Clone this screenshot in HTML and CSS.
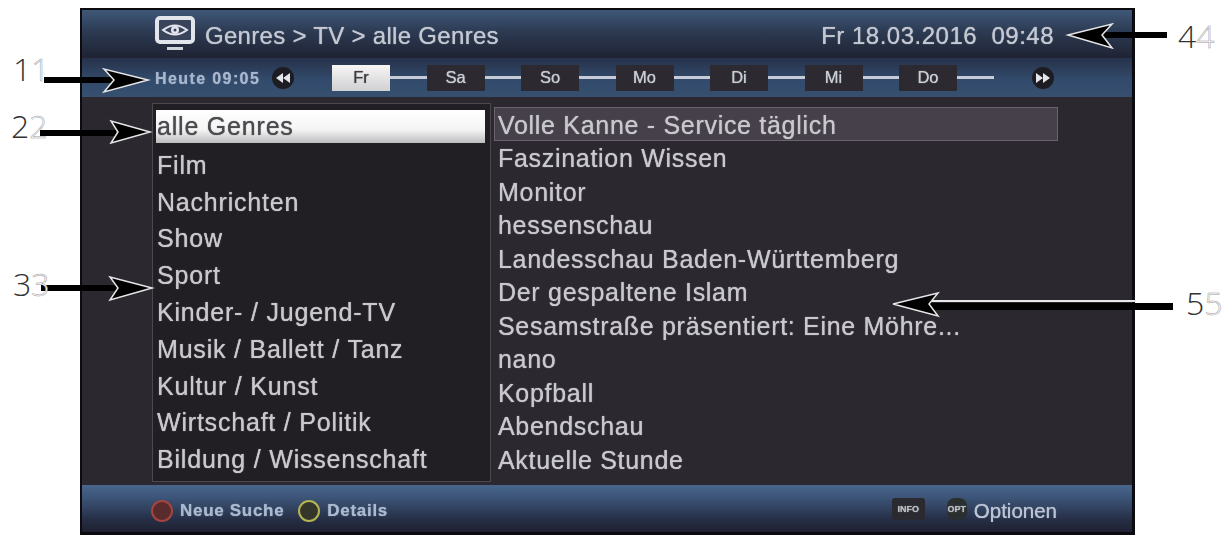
FILE: index.html
```html
<!DOCTYPE html>
<html lang="de">
<head>
  <meta charset="UTF-8" />
  <title>Genres</title>
  <link rel="stylesheet" href="styles.css">
</head>
<body>
  <div class="screen">
    <!-- Kopfzeile -->
    <header class="top">
      <div class="title">
        <svg class="tv-icon" width="40" height="36" viewBox="0 0 40 36">
          <rect x="2" y="2" width="36" height="24" rx="3" fill="#39445a" stroke="#e2e5ec" stroke-width="4"/>
          <path d="M8 14 Q20 5 32 14 Q20 23 8 14 Z" fill="none" stroke="#e2e5ec" stroke-width="2"/>
          <circle cx="20" cy="14" r="4" fill="#e2e5ec"/>
          <circle cx="20" cy="14" r="1.5" fill="#39445a"/>
          <rect x="12" y="31" width="16" height="3" fill="#cfd3dc"/>
        </svg>
        <span>Genres &gt; TV &gt; alle Genres</span>
      </div>
      <div class="clock">Fr 18.03.2016&nbsp; 09:48</div>
    </header>

    <!-- Wochentage -->
    <nav class="days">
      <span class="now">Heute 09:05</span>
      <span class="skip skip-back">
        <svg width="14" height="10" viewBox="0 0 14 10"><path d="M7 0 L0 5 L7 10 Z M14 0 L7 5 L14 10 Z" fill="#e4e6ec"/></svg>
      </span>
      <div class="week">
        <span class="day active">Fr</span><i class="link"></i>
        <span class="day">Sa</span><i class="link"></i>
        <span class="day">So</span><i class="link"></i>
        <span class="day">Mo</span><i class="link"></i>
        <span class="day">Di</span><i class="link"></i>
        <span class="day">Mi</span><i class="link"></i>
        <span class="day">Do</span><i class="link"></i>
      </div>
      <span class="skip skip-next">
        <svg width="14" height="10" viewBox="0 0 14 10"><path d="M0 0 L7 5 L0 10 Z M7 0 L14 5 L7 10 Z" fill="#e4e6ec"/></svg>
      </span>
    </nav>

    <main class="content">
      <ul class="genres">
        <li class="selected">alle Genres</li>
        <li>Film</li>
        <li>Nachrichten</li>
        <li>Show</li>
        <li>Sport</li>
        <li>Kinder- / Jugend-TV</li>
        <li>Musik / Ballett / Tanz</li>
        <li>Kultur / Kunst</li>
        <li>Wirtschaft / Politik</li>
        <li>Bildung / Wissenschaft</li>
      </ul>
      <ul class="shows">
        <li class="selected">Volle Kanne - Service täglich</li>
        <li>Faszination Wissen</li>
        <li>Monitor</li>
        <li>hessenschau</li>
        <li>Landesschau Baden-Württemberg</li>
        <li>Der gespaltene Islam</li>
        <li>Sesamstraße präsentiert: Eine Möhre...</li>
        <li>nano</li>
        <li>Kopfball</li>
        <li>Abendschau</li>
        <li>Aktuelle Stunde</li>
      </ul>
    </main>

    <!-- Fusszeile -->
    <footer class="bottom">
      <div class="keys">
        <span class="dot dot-red"></span><span class="key-label">Neue Suche</span>
        <span class="dot dot-yellow"></span><span class="key-label">Details</span>
      </div>
      <div class="keys">
        <span class="chip chip-info">INFO</span>
        <span class="chip chip-opt">OPT</span>
        <span class="options">Optionen</span>
      </div>
    </footer>
  </div>

  <!-- Beschriftung -->
  <svg class="arrows" width="1231" height="537" viewBox="0 0 1231 537">
    <g fill="#000">
      <rect x="44" y="77" width="70" height="6"/>
      <rect x="40" y="130" width="76" height="6"/>
      <rect x="41" y="285" width="76" height="6"/>
      <rect x="1100" y="32" width="67" height="6"/>
      <rect x="925" y="303" width="248" height="7"/>
    </g>
    <rect x="932" y="300" width="204" height="2" fill="#e8e8ea"/>
    <g fill="#000" stroke="#e6e6e8" stroke-width="1.5">
      <path d="M148 80 L104 69 L114 80 L104 92 Z"/>
      <path d="M150 132 L111 121 L118 132 L111 143 Z"/>
      <path d="M152 288 L110 277 L118 288 L110 300 Z"/>
      <path d="M1068 35 L1112 24 L1102 35 L1112 48 Z"/>
      <path d="M893 304 L938 293 L929 304 L938 316 Z"/>
    </g>
  </svg>
  <div class="num num-1">1<span>1</span></div>
  <div class="num num-2">2<span>2</span></div>
  <div class="num num-3">3<span>3</span></div>
  <div class="num num-4">4<span>4</span></div>
  <div class="num num-5">5<span>5</span></div>
</body>
</html>
```

FILE: styles.css
```css
* {
  margin: 0;
  padding: 0;
  box-sizing: border-box;
}

html, body {
  height: 537px;
  overflow: hidden;
  background-color: #fff;
}

body {
  font-family: 'Liberation Sans', Arial, sans-serif;
  padding: 8px 0 0 80px;
  position: relative;
}

.screen {
  width: 1055px;
  height: 527px;
  display: flex;
  flex-direction: column;
  background-color: #2b2830;
  border: 2px solid #0c0c10;
  border-right-width: 3px;
  border-bottom-width: 3px;
  filter: blur(0.5px);
  text-shadow: 0 0 1px currentColor;
}

.top {
  height: 48px;
  display: flex;
  align-items: center;
  justify-content: space-between;
  padding: 4px 78px 0 73px;
  background: linear-gradient(#3f5878 0%, #2c3a52 45%, #1f2333 100%);
  color: #c4c8d2;
  font-size: 24px;
  letter-spacing: 0.3px;
}

.title {
  display: flex;
  align-items: center;
  gap: 10px;
}

.tv-icon {
  flex: none;
  margin-bottom: 4px;
}

.clock {
  letter-spacing: 0.5px;
}

.days {
  height: 39px;
  display: flex;
  align-items: center;
  padding-left: 73px;
  background: linear-gradient(#27324a 0%, #324a6b 55%, #37506f 100%);
}

.now {
  width: 117px;
  padding-top: 2px;
  font-size: 16px;
  font-weight: bold;
  letter-spacing: 1.4px;
  color: #a7b6cc;
  white-space: nowrap;
}

.skip {
  width: 22px;
  height: 22px;
  border-radius: 50%;
  background-color: #1d1c22;
  display: flex;
  align-items: center;
  justify-content: center;
  flex: none;
}

.week {
  display: flex;
  align-items: center;
  margin-left: 38px;
}

.day {
  width: 58px;
  height: 26px;
  display: flex;
  align-items: center;
  justify-content: center;
  background-color: #2c2a30;
  color: #c9cdd6;
  font-size: 16.5px;
}

.day.active {
  background: linear-gradient(#f6f6f6, #cfd0d2);
  color: #3c3c40;
}

.link {
  width: 36.5px;
  height: 3px;
  background-color: #c7cbd8;
}

.skip-next {
  margin-left: 38.5px;
}

.content {
  flex: 1;
  display: flex;
  padding: 6px 0 3px 70px;
  background-color: #2b2830;
}

.genres, .shows {
  list-style: none;
  color: #c9c8cd;
  font-size: 25px;
  white-space: nowrap;
}

.genres {
  width: 339px;
  padding: 6px 5px 0 3px;
  letter-spacing: 0.8px;
  background-color: #211e24;
  border: 1px solid #4c484e;
}

.genres li {
  height: 36.8px;
  line-height: 36.8px;
  padding-left: 1px;
}

.genres .selected {
  height: 33px;
  line-height: 33px;
  margin-bottom: 3.8px;
  background: linear-gradient(#ffffff 0%, #f4f4f4 60%, #bdbdbf 100%);
  color: #4b4a4e;
}

.shows {
  margin-left: 3px;
  width: 564px;
  padding-top: 4px;
  letter-spacing: 0.7px;
}

.shows li {
  height: 33.5px;
  line-height: 33.5px;
  padding-left: 4px;
}

.shows .selected {
  height: 34px;
  line-height: 34px;
  margin-bottom: 1px;
  background-color: #45404a;
  border: 1px solid #6a656c;
  padding-left: 3px;
}

.bottom {
  height: 47px;
  display: flex;
  align-items: center;
  justify-content: space-between;
  padding: 4px 75px 0 69px;
  background: linear-gradient(#48668c 0%, #3d5679 25%, #252d44 75%, #1f2132 100%);
}

.keys {
  display: flex;
  align-items: center;
}

.dot {
  width: 22px;
  height: 22px;
  border-radius: 50%;
  border: 2px solid;
}

.dot-red {
  background-color: #5a2b2c;
  border-color: #a8443f;
}

.dot-yellow {
  background-color: #34362b;
  border-color: #b5b454;
  margin-left: 14px;
}

.key-label {
  margin-left: 7px;
  font-size: 17px;
  font-weight: bold;
  letter-spacing: 0.7px;
  color: #a9b9cf;
}

.chip {
  height: 22px;
  display: flex;
  align-items: center;
  justify-content: center;
  margin-bottom: 4px;
  font-size: 9px;
  font-weight: bold;
  color: #b9bbc2;
  background-color: #2a2a30;
  border-radius: 3px;
}

.chip-info {
  width: 33px;
}

.chip-opt {
  width: 20px;
  margin-left: 22px;
  border-radius: 8px;
  background-color: #2a3030;
}

.options {
  margin-left: 7px;
  font-size: 20.5px;
  color: #bcc4d6;
}

/* callouts over the picture */
.arrows {
  position: absolute;
  left: 0;
  top: 0;
}

.num {
  position: absolute;
  font-family: 'Open Sans', sans-serif;
  font-weight: 300;
  font-size: 32px;
  line-height: 32px;
  color: #333;
  white-space: nowrap;
}

.num span {
  color: #fff;
  -webkit-text-stroke: 0.5px #999;
}

.num-1 { left: 13px; top: 53px; }
.num-2 { left: 11px; top: 110px; }
.num-3 { left: 13px; top: 268px; }
.num-4 { left: 1178px; top: 20px; }
.num-5 { left: 1186px; top: 287px; }
```
